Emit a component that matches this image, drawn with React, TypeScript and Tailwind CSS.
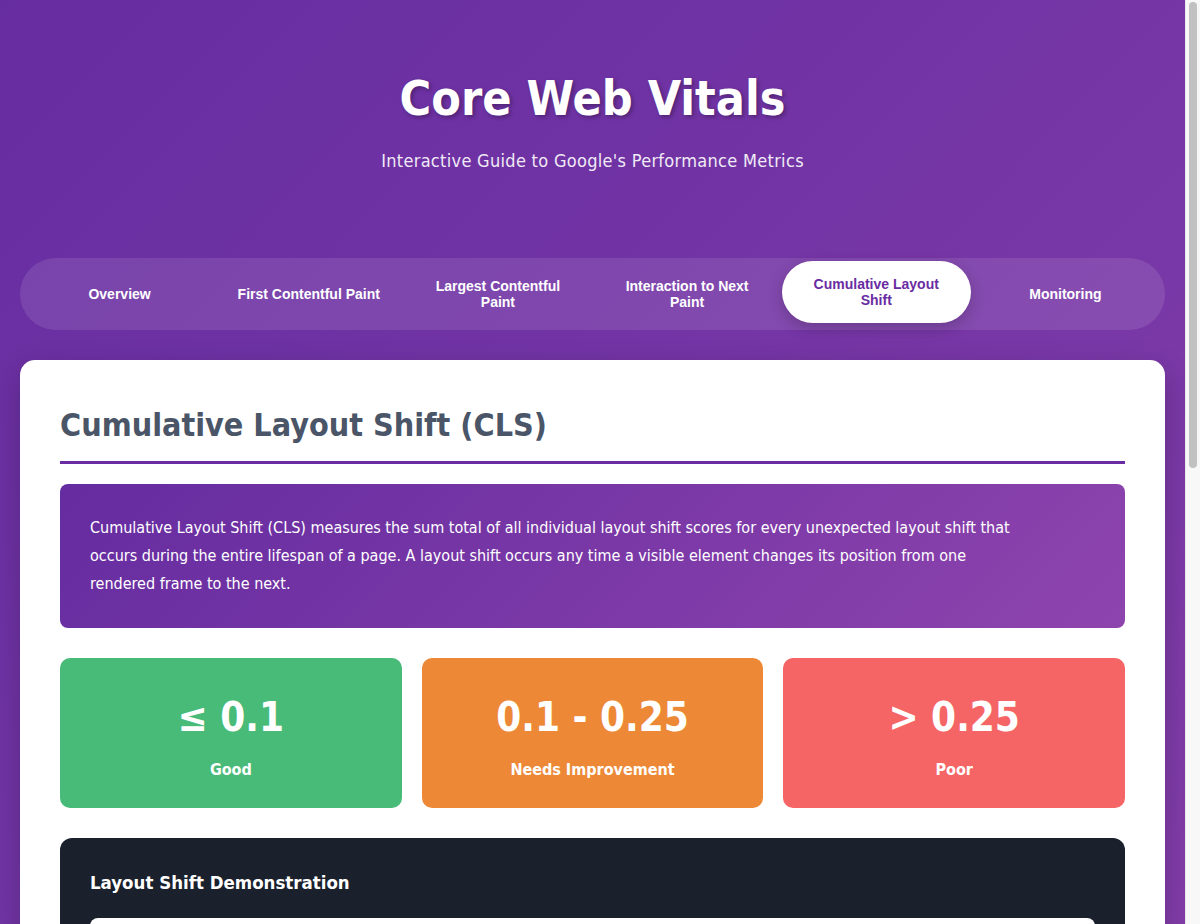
import { useState } from "react";

const tabs = [
  "Overview",
  "First Contentful Paint",
  "Largest Contentful Paint",
  "Interaction to Next Paint",
  "Cumulative Layout Shift",
  "Monitoring",
];

const thresholds = [
  { value: "≤ 0.1", label: "Good", color: "bg-[#48bb78]" },
  { value: "0.1 - 0.25", label: "Needs Improvement", color: "bg-[#ed8936]" },
  { value: "> 0.25", label: "Poor", color: "bg-[#f56565]" },
];

export default function App() {
  const [active, setActive] = useState(4);
  const [shifted, setShifted] = useState(false);

  return (
    <div className="mr-[15px] min-h-screen bg-[linear-gradient(135deg,#662da1,#8e44ad)] font-['DejaVu_Sans_Condensed','DejaVu_Sans',sans-serif] leading-[1.6] text-[#333]">
      <div className="mx-auto max-w-[1200px] p-5">
        {/* Header */}
        <header className="py-10 text-center text-white">
          <h1 className="mb-2.5 text-[48px] font-bold leading-[1.6] [text-shadow:2px_2px_4px_rgba(0,0,0,0.3)]">
            Core Web Vitals
          </h1>
          <p className="text-[18px] leading-[1.6] tracking-[0.3px] opacity-90">
            Interactive Guide to Google's Performance Metrics
          </p>
        </header>

        {/* Tabs */}
        <nav className="mt-[42px] grid grid-cols-6 rounded-full bg-white/10 p-[5px]">
          {tabs.map((t, i) => (
            <button
              key={t}
              onClick={() => setActive(i)}
              className={`h-[62px] rounded-full px-5 font-['Liberation_Sans',Arial,sans-serif] text-[14px] font-bold leading-4 transition ${
                i === active
                  ? "-translate-y-0.5 bg-white text-[#6a2ca2] shadow-[0_5px_15px_rgba(0,0,0,0.2)]"
                  : "text-white"
              }`}
            >
              {t}
            </button>
          ))}
        </nav>

        {/* Content card */}
        <main className="mt-[30px] rounded-[15px] bg-white p-10 shadow-[0_10px_30px_rgba(0,0,0,0.2)]">
          <h2 className="mb-5 border-b-[3px] border-[#6a2ca2] pb-2.5 text-[32px] font-bold leading-[1.6] text-[#4a5568]">
            Cumulative Layout Shift (CLS)
          </h2>

          <div className="rounded-lg bg-[linear-gradient(135deg,#652ca0,#8e44ad)] py-[30px] pl-[30px] pr-[95px] text-base leading-7 text-white">
            Cumulative Layout Shift (CLS) measures the sum total of all individual layout shift scores for
            every unexpected layout shift that occurs during the entire lifespan of a page. A layout shift
            occurs any time a visible element changes its position from one rendered frame to the next.
          </div>

          <div className="mt-[30px] grid grid-cols-3 gap-5">
            {thresholds.map((t) => (
              <div
                key={t.label}
                className={`rounded-[10px] px-[25px] pt-[27px] pb-[25px] text-center text-white ${t.color}`}
              >
                <div className="text-[40px] font-bold leading-[64px]">{t.value}</div>
                <div className="mt-2 text-base font-bold leading-[26px]">{t.label}</div>
              </div>
            ))}
          </div>

          {/* Demo */}
          <div className="mt-[30px] rounded-xl bg-[#1a202c] p-[30px] text-white">
            <h3 className="mb-5 text-[18.5px] font-bold leading-[30px]">Layout Shift Demonstration</h3>
            <div className="rounded-lg bg-white p-5 text-[#333]">
              <div className="mb-4 h-10 rounded bg-gray-200" />
              {shifted && <div className="mb-4 h-24 rounded bg-[#fed7d7]" />}
              <p className="mb-4">
                This paragraph will move down when an image or ad loads above it without reserved space.
              </p>
              <div className="mb-4 h-16 rounded bg-gray-100" />
              <button
                onClick={() => setShifted((s) => !s)}
                className="rounded-md bg-[#6a2ca2] px-5 py-2.5 font-bold text-white"
              >
                {shifted ? "Reset" : "Trigger Layout Shift"}
              </button>
            </div>
          </div>

          <h3 className="mt-[30px] mb-2.5 text-[20px] font-bold text-[#4a5568]">Common Causes of Poor CLS</h3>
          <ul className="list-disc pl-6">
            <li>Images without dimensions</li>
            <li>Ads, embeds, and iframes without dimensions</li>
            <li>Dynamically injected content</li>
            <li>Web fonts causing FOIT/FOUT</li>
            <li>Actions waiting for a network response before updating DOM</li>
          </ul>

          <h3 className="mt-[30px] mb-2.5 text-[20px] font-bold text-[#4a5568]">How to Improve CLS</h3>
          <ul className="list-disc pl-6">
            <li>Always include size attributes on images and video elements</li>
            <li>Reserve space for ad slots and embeds</li>
            <li>Avoid inserting content above existing content</li>
            <li>Prefer transform animations to properties that trigger layout changes</li>
            <li>Use font-display: optional and preload key fonts</li>
          </ul>

          <pre className="mt-5 overflow-x-auto rounded-lg bg-[#2d3748] p-5 font-['Liberation_Mono',monospace] text-sm leading-6 text-[#e2e8f0]">
{`/* Reserve space with aspect-ratio */
img {
  aspect-ratio: 16 / 9;
  width: 100%;
  height: auto;
}`}
          </pre>
        </main>
      </div>

      {/* Scrollbar, drawn over the right edge */}
      <div className="fixed right-0 top-0 h-screen w-[15px] border-l border-[#e8e8e8] bg-[#f8f8f8]">
        <div className="absolute left-[3px] top-[2px] h-[466px] w-2 rounded-full bg-[#c1c1c1]" />
      </div>
    </div>
  );
}
